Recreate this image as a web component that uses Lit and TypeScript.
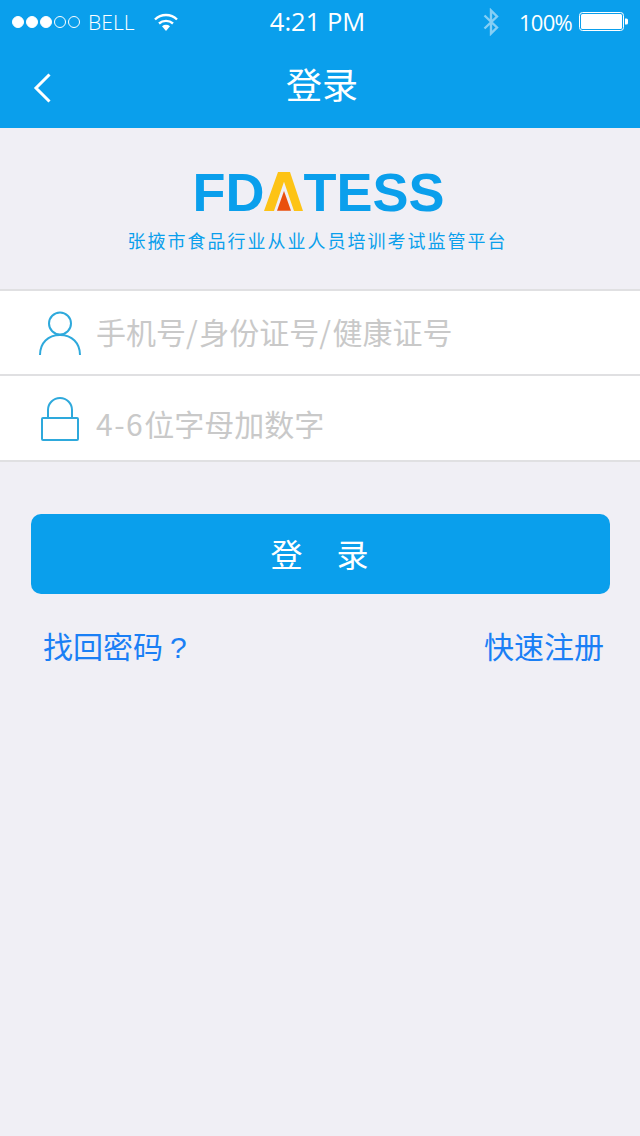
import { LitElement, html, css } from "lit";
import { customElement } from "lit/decorators.js";

@customElement("app-root")
export class AppRoot extends LitElement {
  static styles = css`
    :host {
      display: block;
      width: 640px;
      height: 1136px;
      background: #f0eff5;
      font-family: "Noto Sans CJK SC", "Liberation Sans", sans-serif;
      overflow: hidden;
    }
    .top {
      background: #0a9fec;
      height: 128px;
      color: #fff;
      display: flex;
      flex-direction: column;
    }
    .status {
      height: 42px;
      display: grid;
      grid-template-columns: 1fr auto 1fr;
      align-items: center;
      padding: 0 11px 0 12px;
      font-family: "Open Sans", "Liberation Sans", sans-serif;
      font-weight: 300;
    }
    .s-left, .s-right { display: flex; align-items: center; }
    .s-right { justify-content: flex-end; }
    .dots { display: flex; gap: 2px; }
    .dot {
      width: 12px;
      height: 12px;
      border-radius: 50%;
      border: 1px solid #fff;
      box-sizing: border-box;
    }
    .dot.on { background: #fff; }
    .carrier { font-size: 21px; margin-left: 8px; line-height: 42px; letter-spacing: 0.1px; }
    .wifi { margin-left: 18px; display: block; }
    .time { font-size: 25.500px; font-weight: 400; line-height: 42px; margin-right: 6px; margin-top: -1px; }
    .bt { display: block; margin-right: 20px; opacity: 0.5; }
    .pct { font-size: 22px; font-weight: 400; line-height: 42px; letter-spacing: -0.7px; margin-right: 7px; margin-top: 1px; }
    .battery { display: block; margin-top: 1px; }
    .nav {
      flex: 1;
      display: grid;
      grid-template-columns: 1fr auto 1fr;
      align-items: center;
      padding: 0 28px 0 32px;
    }
    .back { display: block; margin-top: 6px; }
    .title { font-size: 36px; line-height: 44px; margin-top: -5px; }
    .brand {
      height: 161px;
      display: flex;
      flex-direction: column;
      align-items: center;
    }
    .logo {
      margin: 36px 0 0 -3px;
      display: flex;
      align-items: flex-start;
      height: 56px;
      color: #0a9fec;
      font-family: "Liberation Sans", Arial, sans-serif;
      font-weight: 700;
      font-size: 54px;
      line-height: 56px;
    }
    .logo svg { display: block; margin-top: 8px; }
    .tagline {
      margin: 7px 0 0 -5px;
      font-size: 18px;
      line-height: 26px;
      letter-spacing: 2px;
      color: #0a9fec;
    }
    .form {
      background: #fff;
      border-top: 2px solid #e0e0e2;
      border-bottom: 2px solid #e0e0e2;
    }
    .row {
      height: 83px;
      display: flex;
      align-items: center;
      padding-left: 38px;
      gap: 14px;
      font-size: 30px;
      color: #c9c9c9;
    }
    .row.pw { height: 84px; border-top: 2px solid #e0e0e2; }
    .row svg { display: block; flex: none; }
    .row span { line-height: 40px; margin-top: -3px; }
    .row.pw span { margin-top: 10px; }
    .row b { font-weight: 400; letter-spacing: 1.500px; }
    .actions { padding: 52px 30px 0 31px; }
    .btn {
      height: 80px;
      box-sizing: border-box;
      padding: 0 2px 2px 0;
      border-radius: 10px;
      background: #0a9fec;
      color: #fff;
      display: flex;
      align-items: center;
      justify-content: center;
      gap: 34px;
      font-size: 32px;
    }
    .links {
      display: flex;
      justify-content: space-between;
      margin-top: 29px;
      padding: 0 6px 0 12px;
      font-size: 30px;
      line-height: 44px;
      color: #1a7ff5;
    }
    .q { margin-left: 7px; font-family: "Liberation Sans", sans-serif; }
  `;

  render() {
    return html`
      <div class="top">
        <div class="status">
          <div class="s-left">
            <div class="dots">
              <i class="dot on"></i><i class="dot on"></i><i class="dot on"></i><i class="dot"></i><i class="dot"></i>
            </div>
            <span class="carrier">BELL</span>
            <svg class="wifi" width="26" height="20" viewBox="0 0 26 20" fill="none" stroke="#fff" stroke-width="2.4">
              <path d="M2 7.500C8 1.500 18 1.500 24 7.500" />
              <path d="M6 11.500C10 8 16 8 20 11.500" />
              <path fill="#fff" stroke="none" d="M9 14.200C11.500 12.400 14.500 12.400 17 14.200L13 19Z" />
            </svg>
          </div>
          <div class="time">4:21 PM</div>
          <div class="s-right">
            <svg class="bt" width="16" height="28" viewBox="0 0 16 28" fill="none" stroke="#fff" stroke-width="2.4">
              <path d="M1.500 7.500L14 19.500L8 25.500V2.500L14 8.500L1.500 20.500" />
            </svg>
            <span class="pct">100%</span>
            <svg class="battery" width="50" height="20" viewBox="0 0 50 20">
              <rect x="0.5" y="0.5" width="44" height="18" rx="3" fill="none" stroke="#fff" />
              <rect x="2" y="2" width="41" height="15" rx="1.500" fill="#fff" />
              <path d="M46 6.500h1.500a1.500 1.500 0 0 1 1.500 1.500v3a1.500 1.500 0 0 1-1.500 1.500H46Z" fill="#fff" />
            </svg>
          </div>
        </div>
        <div class="nav">
          <svg class="back" width="22" height="32" viewBox="0 0 22 32" fill="none" stroke="#fff" stroke-width="3">
            <path d="M17.500 2.500L4 16L17.500 29.500" />
          </svg>
          <div class="title">登录</div>
          <div></div>
        </div>
      </div>

      <div class="brand">
        <div class="logo">
          <span>FD</span>
          <svg width="39" height="39" viewBox="0 0 39 39">
            <path d="M14 0H26L39 39H30L20 9.700L10 39H0Z" fill="#fdc315" />
            <path d="M20 19L27 38.700H13Z" fill="#ea4f0d" />
          </svg>
          <span>TESS</span>
        </div>
        <div class="tagline">张掖市食品行业从业人员培训考试监管平台</div>
      </div>

      <div class="form">
        <div class="row">
          <svg width="44" height="45" viewBox="0 0 44 45" fill="none" stroke="#2ea9dc" stroke-width="2">
            <circle cx="22" cy="13.500" r="11" />
            <path d="M2 45C2 33 10 25 22 25S42 33 42 45" />
          </svg>
          <span>手机号<b>/</b>身份证号<b>/</b>健康证号</span>
        </div>
        <div class="row pw">
          <svg width="44" height="46" viewBox="0 0 44 46" fill="none" stroke="#2ea9dc" stroke-width="2">
            <path d="M10 22V15a12 12 0 0 1 24 0V22" />
            <rect x="4" y="23" width="36" height="22" rx="1" />
          </svg>
          <span><b>4-6</b>位字母加数字</span>
        </div>
      </div>

      <div class="actions">
        <div class="btn"><span>登</span><span>录</span></div>
        <div class="links"><span>找回密码<span class="q">?</span></span><span>快速注册</span></div>
      </div>
    `;
  }
}
